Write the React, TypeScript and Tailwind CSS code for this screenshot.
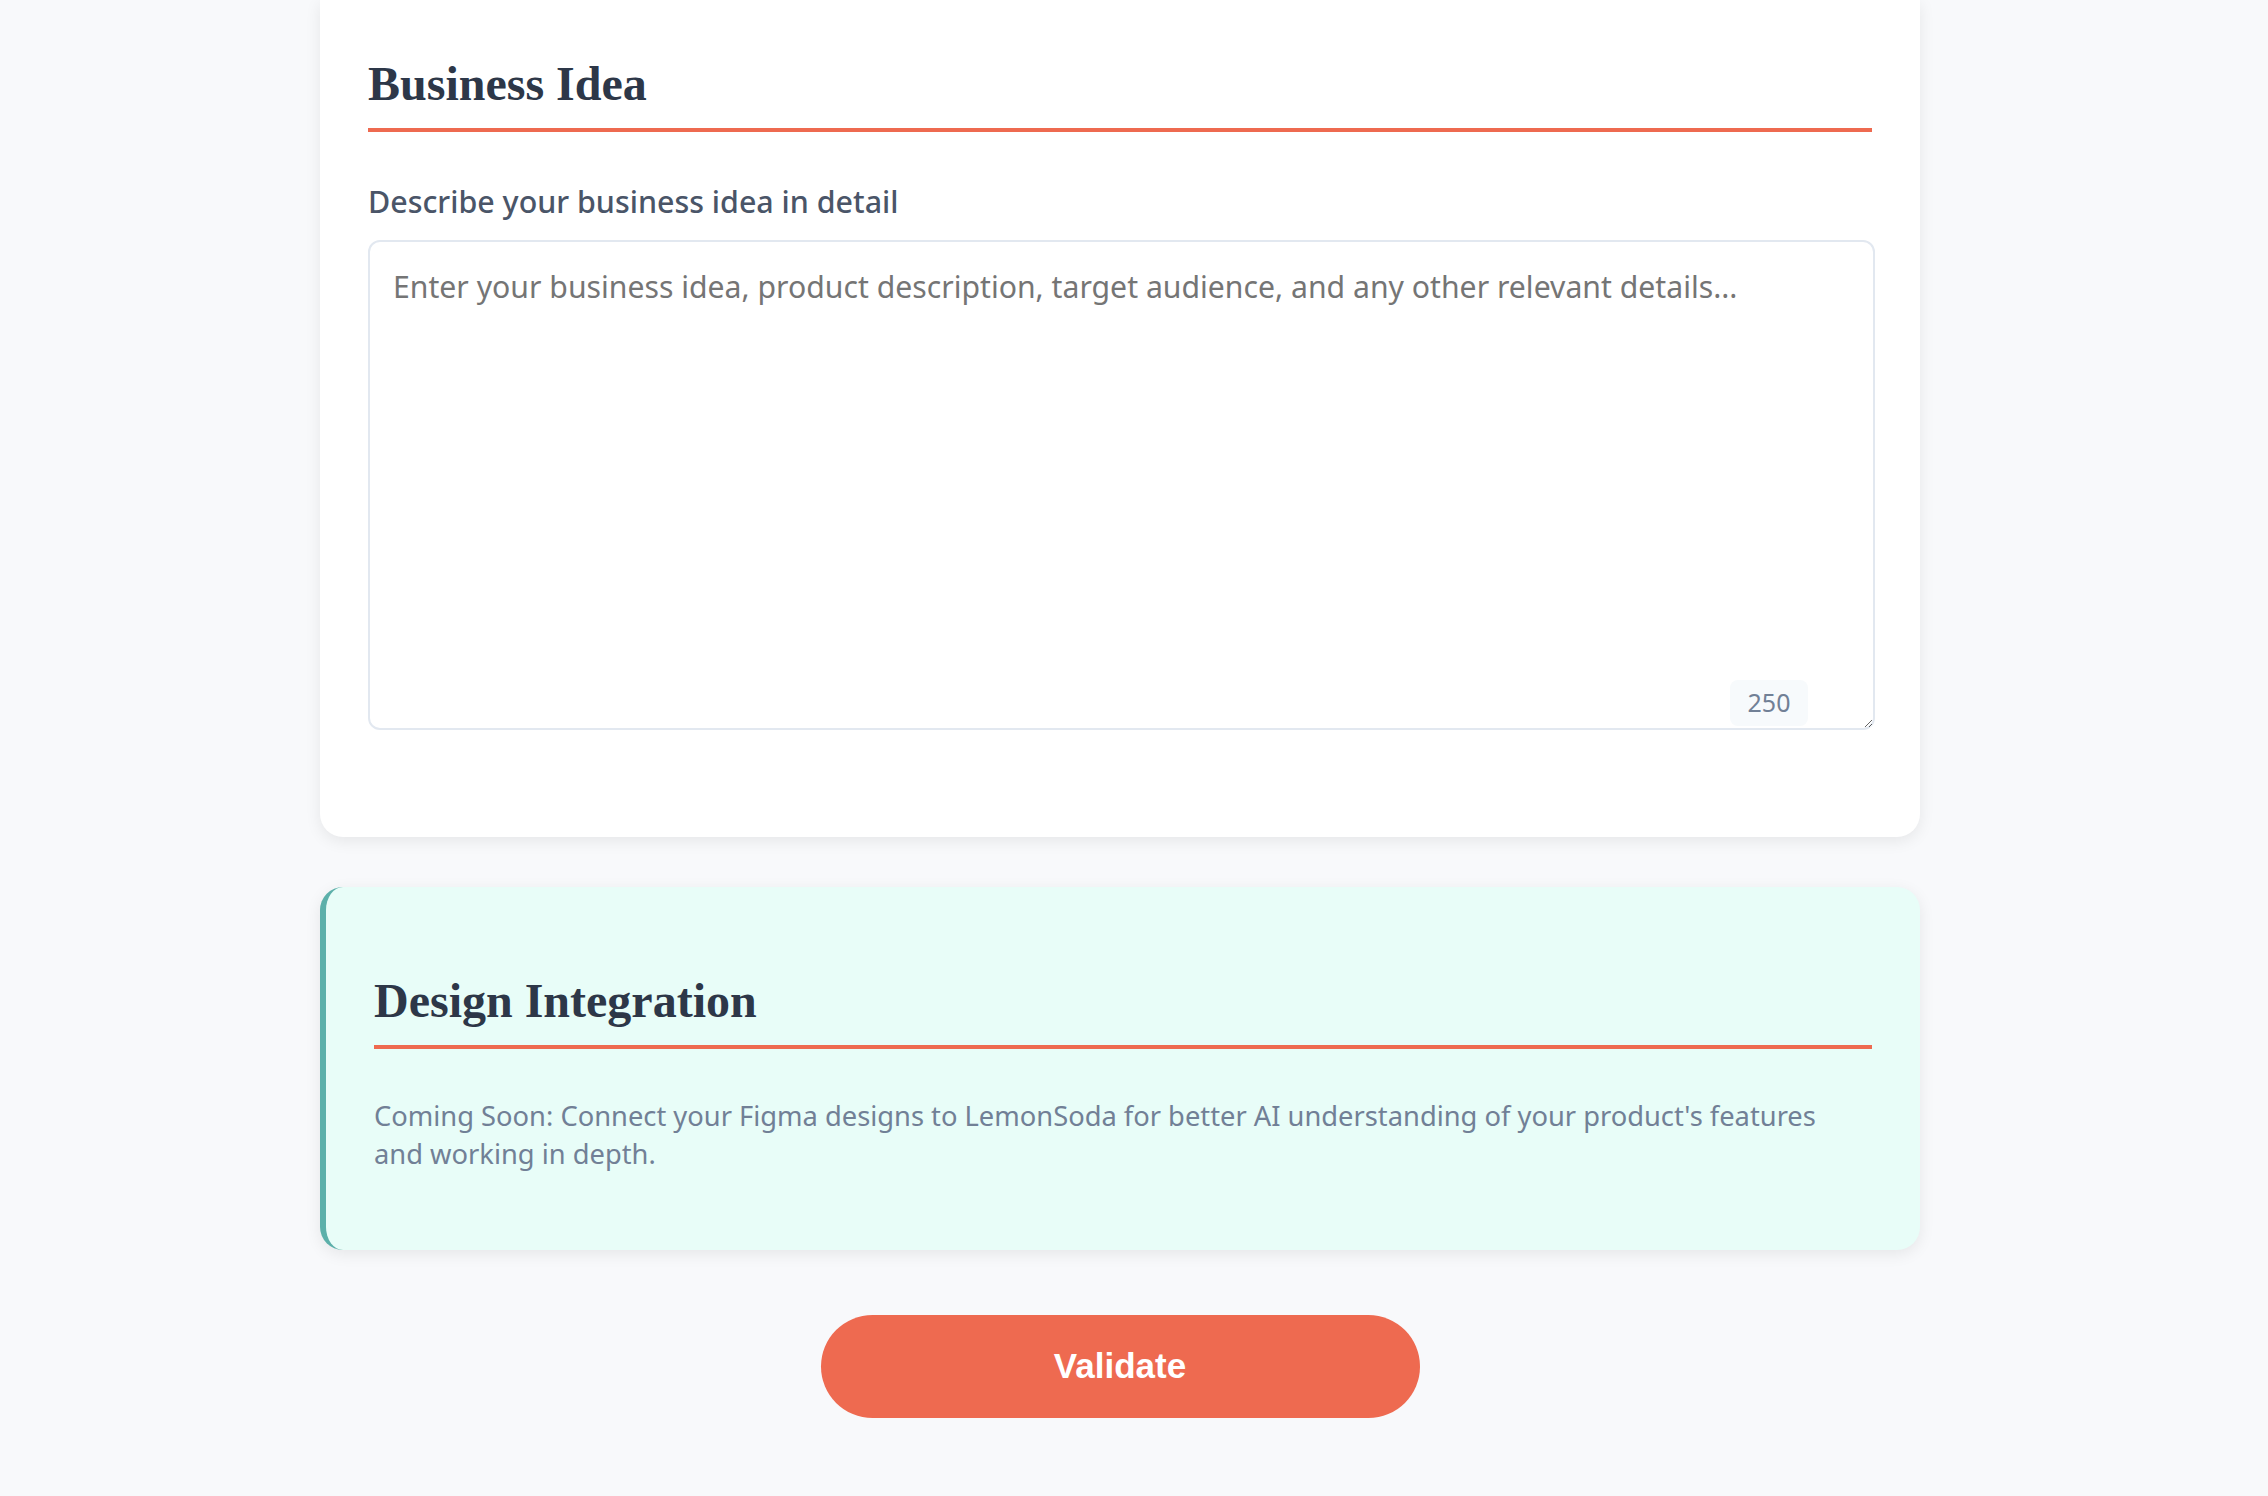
import React from "react";

export default function App() {
  return (
    <div className="min-h-screen bg-[#f8f9fb] pr-[28px] font-['Noto_Sans',sans-serif]">
      <div className="mx-auto flex w-[1600px] flex-col">
        <section className="rounded-b-[23px] bg-white px-[48px] pt-[55px] pb-[107px] shadow-[0_4px_16px_rgba(0,0,0,0.08)]">
          <h2 className="border-b-4 border-[#ee6a50] pb-[15px] font-['Liberation_Serif',serif] text-[48px] leading-[58px] font-bold text-[#2d3748]">
            Business Idea
          </h2>
          <label className="mt-[52px] mb-[20px] block text-[30.4px] leading-[36px] font-medium text-[#4a5568]">
            Describe your business idea in detail
          </label>
          <div className="relative">
            <textarea
              className="block h-[490px] w-[1507px] rounded-[12px] border-2 border-[#e2e8f0] bg-white px-[23px] pt-[24px] pb-[18px] text-[30.2px] leading-[42px] text-[#2d3748] outline-none placeholder:text-[#757575]"
              placeholder="Enter your business idea, product description, target audience, and any other relevant details..."
            />
            <div className="absolute right-[64px] bottom-[4px] flex h-[46px] w-[78px] items-center justify-center rounded-[8px] bg-[#f7fafc] text-[25px] text-[#718096]">
              250
            </div>
          </div>
        </section>

        <section className="mt-[50px] rounded-[23px] border-l-[6px] border-[#5cb0aa] bg-[#e8fdf8] px-[48px] pt-[85px] pb-[77px] shadow-[0_4px_16px_rgba(0,0,0,0.08)]">
          <h2 className="border-b-4 border-[#ee6a50] pb-[15px] font-['Liberation_Serif',serif] text-[48px] leading-[58px] font-bold text-[#2d3748]">
            Design Integration
          </h2>
          <p className="mt-[48px] text-[27.3px] leading-[38px] text-[#718096]">
            Coming Soon: Connect your Figma designs to LemonSoda for better AI understanding of your product's features
            <br />
            and working in depth.
          </p>
        </section>

        <button className="mt-[65px] mb-[77px] flex h-[103px] w-[599px] items-center justify-center self-center rounded-full bg-[#ee6a50] font-['Liberation_Sans',Arial,sans-serif] text-[35px] font-bold text-white">
          Validate
        </button>
      </div>
    </div>
  );
}
